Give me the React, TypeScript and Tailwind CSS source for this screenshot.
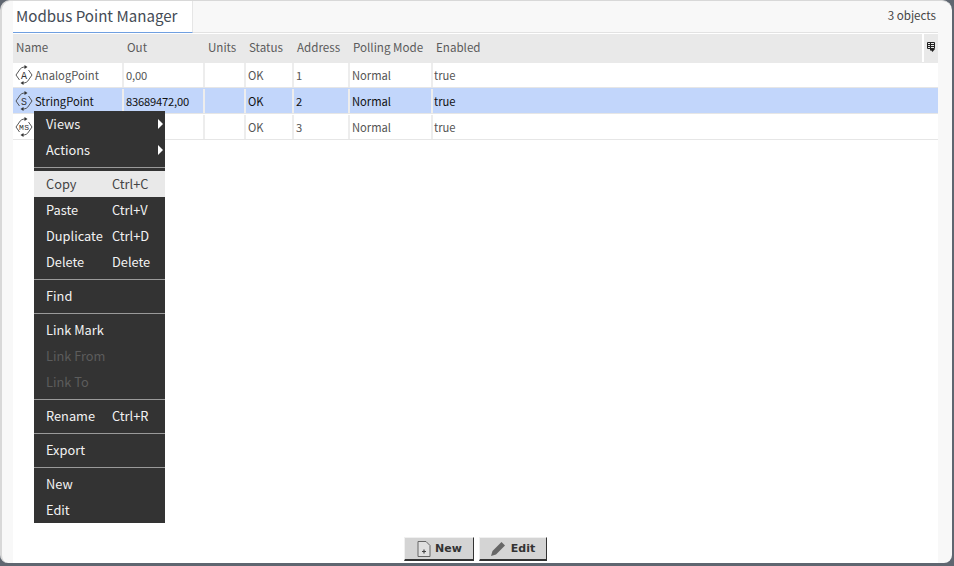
const font = 'font-["Noto_Sans_CJK_SC","Source_Sans_Pro",sans-serif]';

const columns = ['Name', 'Out', 'Units', 'Status', 'Address', 'Polling Mode', 'Enabled'];
const gridCols = 'grid grid-cols-[111px_81px_41px_48px_56px_83px_1fr]';

const rows = [
  { icon: 'A', name: 'AnalogPoint', out: '0,00', address: '1', selected: false, h: 'h-[25px]' },
  { icon: 'S', name: 'StringPoint', out: '83689472,00', address: '2', selected: true, h: 'h-[26px] pt-px' },
  { icon: 'MS', name: '', out: '', address: '3', selected: false, h: 'h-[26px] pt-px' },
];

type MenuEntry = { label: string; key?: string; arrow?: boolean; disabled?: boolean; hover?: boolean } | 'sep';

const menu: MenuEntry[] = [
  { label: 'Views', arrow: true },
  { label: 'Actions', arrow: true },
  'sep',
  { label: 'Copy', key: 'Ctrl+C', hover: true },
  { label: 'Paste', key: 'Ctrl+V' },
  { label: 'Duplicate', key: 'Ctrl+D' },
  { label: 'Delete', key: 'Delete' },
  'sep',
  { label: 'Find' },
  'sep',
  { label: 'Link Mark' },
  { label: 'Link From', disabled: true },
  { label: 'Link To', disabled: true },
  'sep',
  { label: 'Rename', key: 'Ctrl+R' },
  'sep',
  { label: 'Export' },
  'sep',
  { label: 'New' },
  { label: 'Edit' },
];

function PointIcon({ letter }: { letter: string }) {
  return (
    <svg width="20" height="22" viewBox="0 0 20 22" fill="none" stroke="#444" strokeWidth="0.9" className="shrink-0">
      <path d="M5.5 6 L2 11 L5.5 16" />
      <path d="M14.5 6 L18 11 L14.5 16" />
      <path d="M5.5 6 C6.5 4 8.5 3 11 3" />
      <path d="M14.5 16 C13.5 18 11.5 19 9 19" />
      <path d="M10.5 1 L13.5 3 L10.5 5 Z" fill="#333" stroke="none" />
      <path d="M9.5 17 L6.5 19 L9.5 21 Z" fill="#333" stroke="none" />
      <text
        x="10"
        y={letter.length > 1 ? 14 : 15}
        textAnchor="middle"
        fill="#333"
        stroke="none"
        fontSize={letter.length > 1 ? 8 : 10}
        textLength={letter.length > 1 ? 10 : undefined}
        fontWeight="400"
        fontFamily="'Liberation Mono', monospace"
      >
        {letter}
      </text>
    </svg>
  );
}

function ContextMenu() {
  return (
    <div className="absolute left-[34px] top-[111px] w-[131px] bg-[#333333] text-[12.8px] text-[#f2f2f2]">
      {menu.map((item, i) => {
        if (item === 'sep') {
          return (
            <div key={i} className="h-[8px] flex items-center">
              <div className="h-px w-full bg-[#9a9a9a]" />
            </div>
          );
        }
        return (
          <div
            key={i}
            className={`relative h-[26px] pl-[12px] flex items-center ${
              item.hover ? 'bg-[#e9e9e9] text-[#444]' : item.disabled ? 'text-[#5c5c5c]' : ''
            }`}
          >
            <span>{item.label}</span>
            {item.key && <span className="absolute left-[78px]">{item.key}</span>}
            {item.arrow && (
              <span className="absolute right-[2px] top-[8px] w-0 h-0 border-y-[5px] border-y-transparent border-l-[5px] border-l-white" />
            )}
          </div>
        );
      })}
    </div>
  );
}

export default function App() {
  return (
    <div className={`${font} relative h-[566px] w-[954px] bg-[#5f6670] overflow-hidden`}>
      <div className="h-[563px] w-[952px] bg-[#f8f8f8] rounded-tl-[10px] rounded-tr-[10px] rounded-bl-[8px] rounded-br-[8px] overflow-hidden border-l-2 border-t border-[#d8d8d8] flex flex-col">
        <div className="ml-[11px] mr-[14px] flex-1 flex flex-col bg-white">
          {/* tab strip */}
          <div className="h-[32px] flex items-stretch bg-[#f8f8f8] border-b border-[#e2e2e2] relative">
            <div className="w-[180px] -mb-px bg-white border-b border-[#6f9fe0] border-r border-r-[#e6e6e6] pl-[3px] pb-[2px] text-[15.1px] text-[#444b55] whitespace-nowrap flex items-center">
              Modbus Point Manager
            </div>
            <div className="flex-1 flex items-center justify-end pr-[2px] pb-[2px] text-[11.6px] text-[#444]">3 objects</div>
          </div>

          {/* table header */}
          <div className={`${gridCols} mt-px h-[29px] bg-[#e9e9e9] text-[11.6px] text-[#5b5b5b] relative`}>
            {columns.map((c) => (
              <div key={c} className="pl-[3px] pb-[2px] flex items-center whitespace-nowrap">
                {c}
              </div>
            ))}
            <div className="absolute right-0 top-0 h-[28px] w-[16px] border-l-2 border-white flex items-center justify-center pb-[3px]">
              <svg width="8" height="10" viewBox="0 0 8 10">
                <path d="M0.5 0.5 H7.5 V6.5 H0.5 Z M0.5 2.5 H7.5 M0.5 4.5 H7.5 M3.5 0.5 V8.5" fill="none" stroke="#222" />
                <path d="M3 7 H8 L5.5 10 Z" fill="#222" />
              </svg>
            </div>
          </div>

          {/* rows */}
          {rows.map((r) => (
            <div
              key={r.icon}
              className={`${gridCols} ${r.h} border-b border-[#e6e6e6] text-[11.2px] ${
                r.selected ? 'bg-[#c2d6fb] text-[#111]' : 'bg-white text-[#555]'
              }`}
            >
              <div className="flex items-center gap-[1px] border-r-2 border-[#ededed] pl-[1px]">
                <PointIcon letter={r.icon} />
                <span>{r.name}</span>
              </div>
              <div className="flex items-center pl-[2px] tracking-[-0.2px] border-r-2 border-[#ededed]">{r.out}</div>
              <div className="border-r-2 border-[#ededed]" />
              <div className="flex items-center pl-[2px] border-r-2 border-[#ededed]">OK</div>
              <div className="flex items-center pl-[2px] border-r-2 border-[#ededed]">{r.address}</div>
              <div className="flex items-center pl-[2px] border-r-2 border-[#ededed]">Normal</div>
              <div className="flex items-center pl-[1px]">true</div>
            </div>
          ))}

          <div className="flex-1" />

          {/* footer buttons */}
          <div className="h-[24px] mb-[2px] flex justify-center gap-[5px] pr-[1px]">
            <button className="w-[70px] h-[24px] pl-[2px] bg-[#d4d4d4] border-t border-l border-t-[#f0f0f0] border-l-[#f0f0f0] border-r border-b-2 border-r-[#333] border-b-[#333] flex items-center justify-center gap-[4px] text-[11px] font-bold text-[#333] font-['DejaVu_Sans']">
              <svg width="14" height="16" viewBox="0 0 14 16" fill="none">
                <path d="M1 0.5 H9 L13 4.5 V15.5 H1 Z" stroke="#666" fill="#e0e0e0" />
                <path d="M7 8.5 V12.5 M5 10.5 H9" stroke="#444" strokeWidth="1.2" />
              </svg>
              <span className="pt-[2px]">New</span>
            </button>
            <button className="w-[68px] h-[24px] bg-[#d4d4d4] border-t border-l border-t-[#f0f0f0] border-l-[#f0f0f0] border-r border-b-2 border-r-[#333] border-b-[#333] flex items-center justify-center gap-[4px] text-[11px] font-bold text-[#333] font-['DejaVu_Sans']">
              <svg width="17" height="17" viewBox="0 0 17 17">
                <path d="M1 16 L2.5 11 L11.5 2 L15 5.5 L6 14.5 Z" fill="#666" />
              </svg>
              <span className="pt-[2px]">Edit</span>
            </button>
          </div>
        </div>
      </div>
      <ContextMenu />
    </div>
  );
}
